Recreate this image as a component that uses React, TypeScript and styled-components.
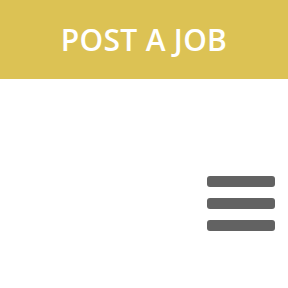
import styled, { createGlobalStyle } from "styled-components";

const GlobalStyle = createGlobalStyle`
  html, body {
    margin: 0;
    padding: 0;
    background: #ffffff;
  }
`;

const Page = styled.div`
  width: 288px;
  height: 288px;
  display: flex;
  flex-direction: column;
  background: #ffffff;
`;

const Banner = styled.div`
  height: 79px;
  background-color: #dcc254;
  color: #ffffff;
  display: flex;
  align-items: center;
  justify-content: center;
  font-family: "Open Sans", "Liberation Sans", sans-serif;
  font-weight: 600;
  font-size: 30px;
  letter-spacing: 0.3px;
  box-sizing: border-box;
`;

const MenuRow = styled.div`
  display: flex;
  justify-content: flex-end;
  padding: 97px 13px 0 0;
`;

const Burger = styled.div`
  width: 68px;
  display: flex;
  flex-direction: column;
  gap: 11px;
`;

const Bar = styled.span`
  display: block;
  height: 11px;
  border-radius: 3px;
  background-color: #626262;
`;

const App = () => {
  return (
    <>
      <GlobalStyle />
      <Page>
        <Banner>POST A JOB</Banner>
        <MenuRow>
          <Burger aria-label="menu">
            <Bar />
            <Bar />
            <Bar />
          </Burger>
        </MenuRow>
      </Page>
    </>
  );
};

export default App;
